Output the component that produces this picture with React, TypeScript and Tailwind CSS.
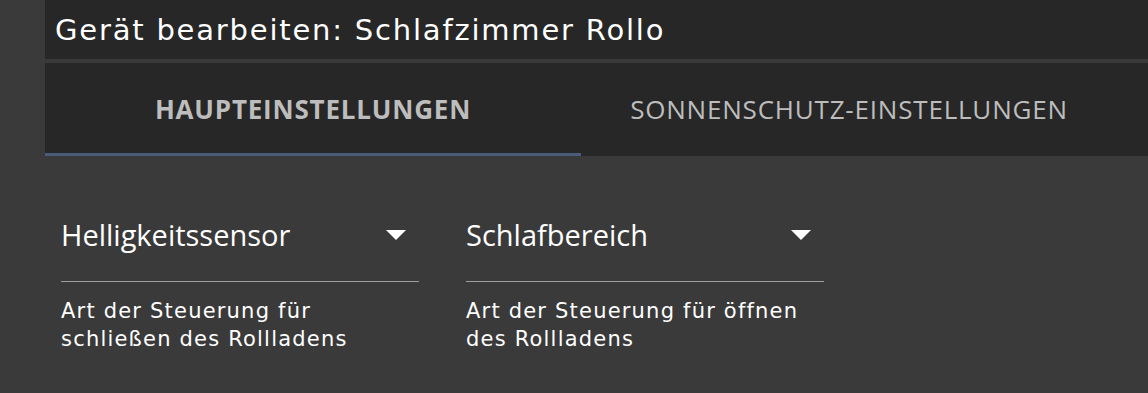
import { useState } from "react";

const TABS = ["Haupteinstellungen", "Sonnenschutz-Einstellungen"];

interface SelectFieldProps {
  value: string;
  helper: string;
}

function SelectField({ value, helper }: SelectFieldProps) {
  return (
    <div className="flex w-[358px] flex-col">
      <div className="flex items-center justify-between border-b border-[#9e9e9e] pb-[26px] pr-[13px]">
        <span className="font-['Open_Sans',sans-serif] text-[29px] leading-[40px] text-white">
          {value}
        </span>
        <svg width="20" height="10" viewBox="0 0 20 10">
          <path d="M0 0 L20 0 L10 10 Z" fill="#ffffff" />
        </svg>
      </div>
      <p className="mt-[15px] font-['DejaVu_Sans',sans-serif] text-[21px] leading-[28px] tracking-[1.2px] text-white">
        {helper}
      </p>
    </div>
  );
}

export default function App() {
  const [activeTab, setActiveTab] = useState(0);

  return (
    <div className="h-[393px] w-[1148px] overflow-hidden bg-[#3a3a3a] pl-[45px]">
      <div className="flex h-[59px] items-center bg-[#272727] px-[10px]">
        <h1 className="font-['DejaVu_Sans',sans-serif] text-[29px] leading-[34px] tracking-[1.8px] text-white">
          Gerät bearbeiten: Schlafzimmer Rollo
        </h1>
      </div>
      <div className="mt-[4px] flex h-[93px] bg-[#272727]">
        {TABS.map((tab, i) => (
          <button
            key={tab}
            onClick={() => setActiveTab(i)}
            className={`flex w-[536px] items-center justify-center border-b-[3px] pt-[2px] font-['Open_Sans',sans-serif] text-[26px] uppercase tracking-[0.8px] text-[#bdbdbd] ${
              activeTab === i
                ? "border-[#4b5b7c] font-bold"
                : "border-transparent"
            }`}
          >
            {tab}
          </button>
        ))}
      </div>
      <div className="flex gap-[47px] pl-[16px] pt-[59px]">
        <SelectField
          value="Helligkeitssensor"
          helper="Art der Steuerung für schließen des Rollladens"
        />
        <SelectField
          value="Schlafbereich"
          helper="Art der Steuerung für öffnen des Rollladens"
        />
      </div>
    </div>
  );
}
